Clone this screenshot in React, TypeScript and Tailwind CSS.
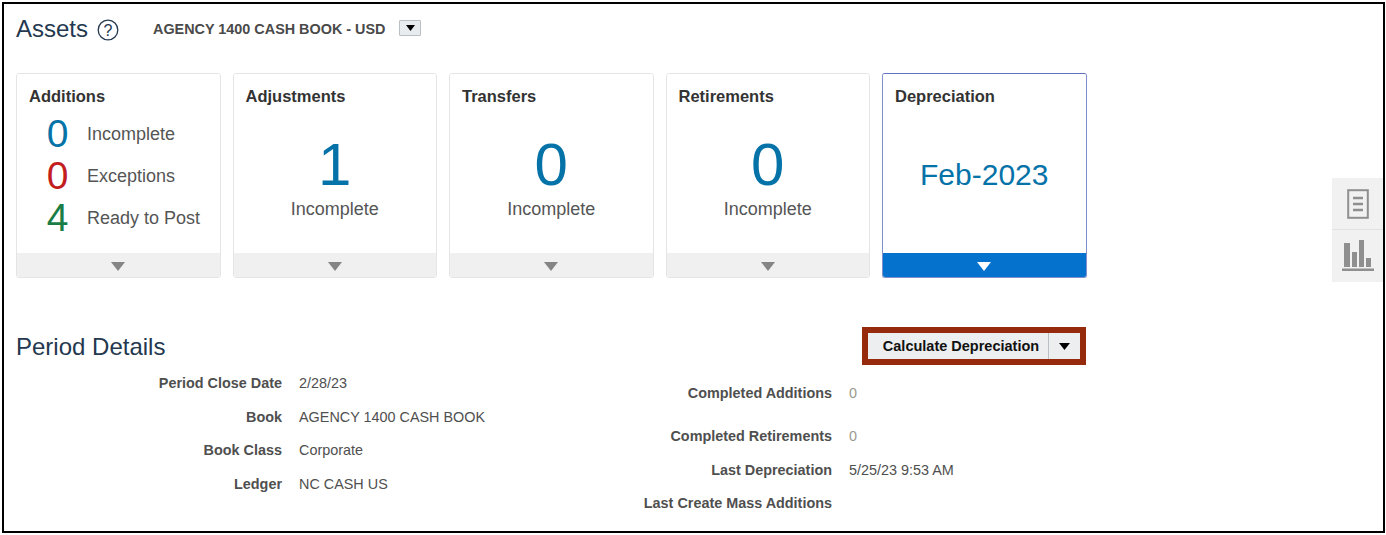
const FONT = "font-['Liberation_Sans',Arial,sans-serif]";

function Caret({ className }: { className: string }) {
  return (
    <svg width="14" height="9" viewBox="0 0 14 9" className={className}>
      <path d="M0 0H14L7 9Z" fill="currentColor" />
    </svg>
  );
}

function Card({ title, active, children }: { title: string; active?: boolean; children: React.ReactNode }) {
  return (
    <div
      className={`flex h-[205px] w-[204.5px] flex-col overflow-hidden rounded-[3px] border ${
        active ? "border-[#7f90cc] border-t-[#5f72bd]" : "border-[#e3e5e6]"
      }`}
    >
      <div className="flex flex-1 flex-col bg-white">
        <div className="pl-[12px] pt-[12px] text-[16.5px] leading-[20px] font-bold text-[#333333]">{title}</div>
        <div className="flex-1">{children}</div>
      </div>
      <div
        className={`flex h-[24px] items-center justify-center pt-[2px] ${
          active ? "bg-[#0572ce] text-white" : "bg-[#f0f0f0] text-[#858585]"
        }`}
      >
        <Caret className="" />
      </div>
    </div>
  );
}

function Single({ value }: { value: string }) {
  return (
    <div className="flex flex-col items-center pt-[29px]">
      <div className="text-[60px] leading-[60px] text-[#0572a8]">{value}</div>
      <div className="mt-[3px] text-[18px] leading-[22px] text-[#555555]">Incomplete</div>
    </div>
  );
}

function Stat({ value, color, label }: { value: string; color: string; label: string }) {
  return (
    <div className="flex h-[42px] items-center">
      <div className={`w-[41px] text-center text-[39px] leading-[42px] ${color}`}>{value}</div>
      <div className="ml-[9px] text-[18px] leading-[22px] text-[#555555]">{label}</div>
    </div>
  );
}

function Row({ label, value, width, h, muted }: { label: string; value?: string; width: string; h: string; muted?: boolean }) {
  return (
    <div className={`flex items-center whitespace-nowrap ${h}`}>
      <div className={`${width} text-right text-[14.4px] font-bold text-[#4f4f4f]`}>{label}</div>
      {value && <div className={`ml-[17px] text-[14.4px] ${muted ? "text-[#9a9a90]" : "text-[#4f4f4f]"}`}>{value}</div>}
    </div>
  );
}

export default function App() {
  return (
    <div className={`relative h-[535px] w-[1386px] bg-white pl-[2px] pt-[2px] ${FONT}`}>
      <div className="box-border h-[531px] w-[1383px] border-2 border-black pl-[12px] pt-[9px]">
        <div className="flex h-[32px] items-center">
          <div className="text-[24px] leading-[32px] text-[#24384f]">Assets</div>
          <svg width="22" height="22" viewBox="0 0 22 22" className="ml-[9px] mt-[2px] text-[#24384f]">
            <circle cx="11" cy="11" r="9.8" fill="none" stroke="currentColor" strokeWidth="1.3" />
            <text x="11" y="16.5" textAnchor="middle" fontSize="16" fill="currentColor" fontFamily="Liberation Sans">?</text>
          </svg>
          <div className="ml-[34px] pt-[1px] text-[14.4px] font-bold text-[#4a4a4a]">AGENCY 1400 CASH BOOK - USD</div>
          <div className="mb-[2px] ml-[14px] flex h-[16px] w-[22px] items-center justify-center rounded-[1px] border border-[#b9bfc4] bg-[#e9ecef]">
            <Caret className="h-[6px] w-[9px] text-black" />
          </div>
        </div>

        <div className="mt-[28px] flex gap-[12px]">
          <Card title="Additions">
            <div className="flex flex-col pl-[20px] pt-[7px]">
              <Stat value="0" color="text-[#0572a8]" label="Incomplete" />
              <Stat value="0" color="text-[#c31d1d]" label="Exceptions" />
              <Stat value="4" color="text-[#1a7d45]" label="Ready to Post" />
            </div>
          </Card>
          <Card title="Adjustments"><Single value="1" /></Card>
          <Card title="Transfers"><Single value="0" /></Card>
          <Card title="Retirements"><Single value="0" /></Card>
          <Card title="Depreciation" active>
            <div className="pt-[49px] text-center text-[30px] leading-[40px] text-[#0572a8]">Feb-2023</div>
          </Card>
        </div>

        <div className="mt-[49px] flex w-[1070px] items-center justify-between">
          <div className="pt-[1px] text-[24px] leading-[32px] text-[#24384f]">Period Details</div>
          <div className="flex h-[38px] w-[224px] border-[6px] border-[#952a0c] bg-[#eceeef]">
            <div className="flex flex-1 items-center justify-center border-r border-[#b9bfc4] pl-[6px] pt-[1px] text-[14.5px] font-bold text-[#111111]">
              Calculate Depreciation
            </div>
            <div className="flex w-[31px] items-center justify-center">
              <Caret className="h-[7px] w-[11px] text-black" />
            </div>
          </div>
        </div>

        <div className="mt-[1px] flex">
          <div className="flex w-[470px] flex-col pt-[1px]">
            <Row width="w-[266px]" h="h-[33.6px]" label="Period Close Date" value="2/28/23" />
            <Row width="w-[266px]" h="h-[33.6px]" label="Book" value="AGENCY 1400 CASH BOOK" />
            <Row width="w-[266px]" h="h-[33.6px]" label="Book Class" value="Corporate" />
            <Row width="w-[266px]" h="h-[33.6px]" label="Ledger" value="NC CASH US" />
          </div>
          <div className="flex flex-col pt-[11px]">
            <Row width="w-[346px]" h="h-[33px]" label="Completed Additions" value="0" muted />
            <div className="h-[10px]" />
            <Row width="w-[346px]" h="h-[33px]" label="Completed Retirements" value="0" muted />
            <Row width="w-[346px]" h="h-[35px]" label="Last Depreciation" value="5/25/23 9:53 AM" />
            <Row width="w-[346px]" h="h-[32px]" label="Last Create Mass Additions" />
          </div>
        </div>
      </div>

      <div className="absolute left-[1332px] top-[178px] flex h-[104px] w-[51px] flex-col bg-[#f1f1f1]">
        <div className="flex h-[52px] items-center justify-center border-b border-[#e2e2e2]">
          <svg width="22" height="30" viewBox="0 0 22 30" fill="none" stroke="#8f8f8f" strokeWidth="2">
            <rect x="1.2" y="1.2" width="19.6" height="27.6" />
            <path d="M6 9H16M6 15H16M6 21H16" strokeWidth="2.4" />
          </svg>
        </div>
        <div className="flex flex-1 items-center justify-center">
          <svg width="32" height="32" viewBox="0 0 32 32" fill="#8f8f8f">
            <rect x="2" y="3" width="6" height="24" />
            <rect x="10" y="12" width="5" height="15" />
            <rect x="17" y="0" width="5" height="27" />
            <rect x="24" y="18" width="5" height="9" />
            <rect x="0" y="28.5" width="32" height="2.5" />
          </svg>
        </div>
      </div>
    </div>
  );
}
